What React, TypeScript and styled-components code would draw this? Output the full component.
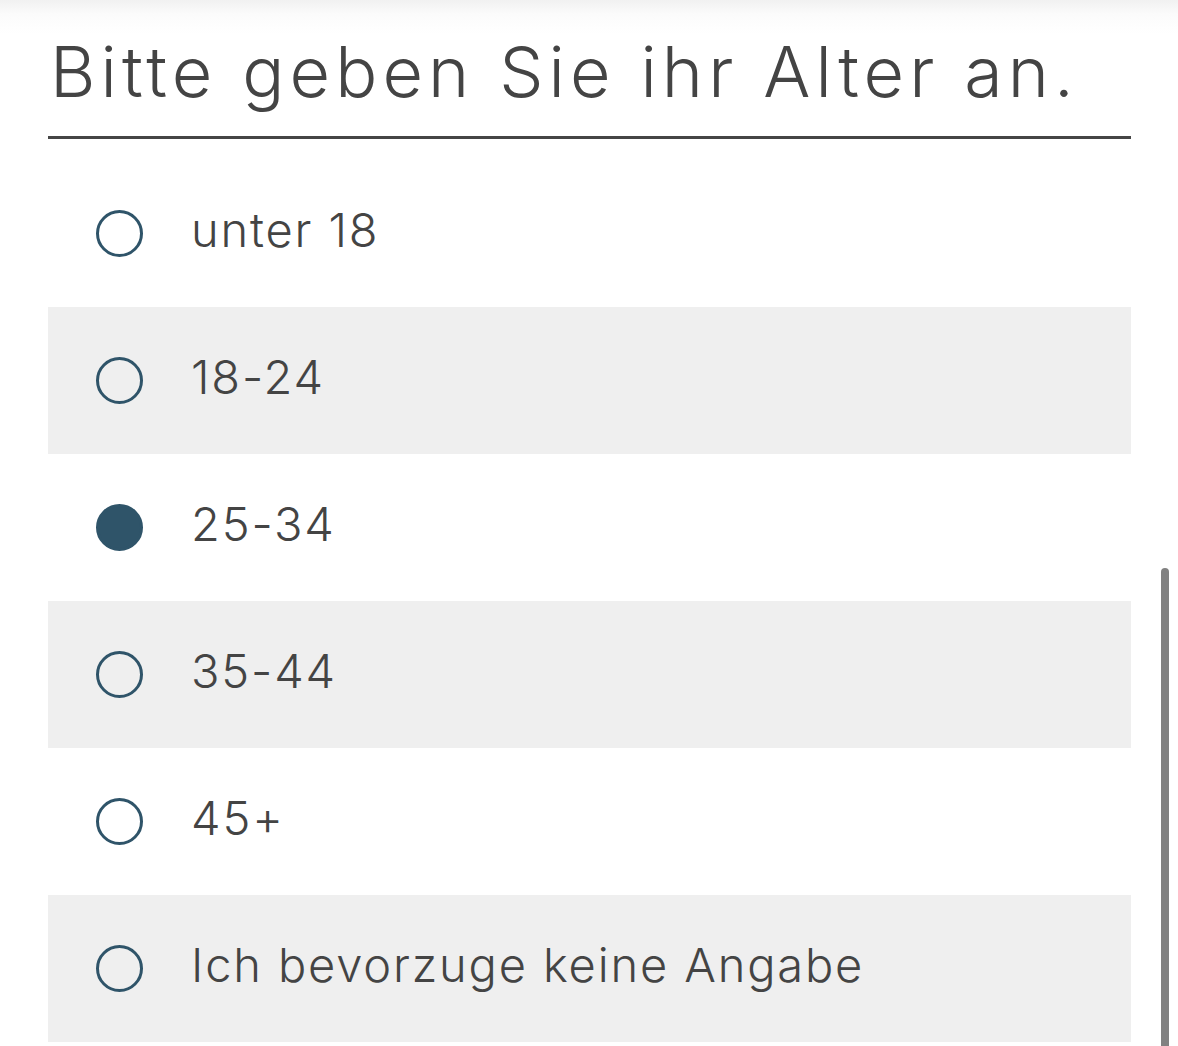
import React, { useState } from "react";
import styled, { createGlobalStyle } from "styled-components";

const GlobalStyle = createGlobalStyle`
  html, body {
    margin: 0;
    padding: 0;
    background: #ffffff;
  }
  body {
    font-family: "Inter", "Open Sans", "Liberation Sans", sans-serif;
    color: #444444;
    overflow: hidden;
  }
`;

const Screen = styled.div`
  position: relative;
  width: 1178px;
  height: 1046px;
  overflow: hidden;
  background: linear-gradient(to bottom, #f1f1f1 0px, #fbfbfb 14px, #ffffff 34px);
`;

const Form = styled.form`
  display: flex;
  flex-direction: column;
  width: 1083px;
  margin-left: 48px;
`;

const Question = styled.h1`
  margin: 0;
  padding-top: 30px;
  padding-left: 2px;
  height: 139px;
  box-sizing: border-box;
  border-bottom: 3px solid #454545;
  font-family: "Inter", "Open Sans", sans-serif;
  font-weight: 300;
  font-size: 70px;
  line-height: 84px;
  letter-spacing: 5.1px;
  color: #444444;
  white-space: nowrap;
`;

const Options = styled.div`
  display: flex;
  flex-direction: column;
  margin-top: 21px;
`;

const Option = styled.label<{ $shaded: boolean }>`
  display: flex;
  align-items: center;
  height: 147px;
  padding-left: 48px;
  gap: 48px;
  background: ${(p) => (p.$shaded ? "#efefef" : "transparent")};
  cursor: pointer;
`;

const HiddenInput = styled.input`
  position: absolute;
  opacity: 0;
  width: 0;
  height: 0;
  margin: 0;
`;

const Dot = styled.span<{ $checked: boolean }>`
  flex: none;
  width: 47px;
  height: 47px;
  box-sizing: border-box;
  border-radius: 50%;
  border: 3px solid #2f5469;
  background: ${(p) => (p.$checked ? "#2f5469" : "transparent")};
`;

const OptionText = styled.span`
  font-family: "Inter", "Open Sans", sans-serif;
  font-weight: 300;
  font-size: 47px;
  letter-spacing: 1.85px;
  color: #444444;
  margin-top: -8px;
`;

const ScrollThumb = styled.div`
  position: absolute;
  right: 9px;
  top: 568px;
  width: 8px;
  height: 500px;
  border-radius: 4px;
  background: #818181;
`;

const choices = [
  "unter 18",
  "18-24",
  "25-34",
  "35-44",
  "45+",
  "Ich bevorzuge keine Angabe",
];

export default function App() {
  const [age, setAge] = useState("25-34");
  return (
    <>
      <GlobalStyle />
      <Screen>
        <Form onSubmit={(e) => e.preventDefault()}>
          <Question>Bitte geben Sie ihr Alter an.</Question>
          <Options role="radiogroup">
            {choices.map((c, i) => (
              <Option key={c} $shaded={i % 2 === 1}>
                <HiddenInput
                  type="radio"
                  name="alter"
                  value={c}
                  checked={age === c}
                  onChange={() => setAge(c)}
                />
                <Dot $checked={age === c} />
                <OptionText>{c}</OptionText>
              </Option>
            ))}
          </Options>
        </Form>
        <ScrollThumb />
      </Screen>
    </>
  );
}
